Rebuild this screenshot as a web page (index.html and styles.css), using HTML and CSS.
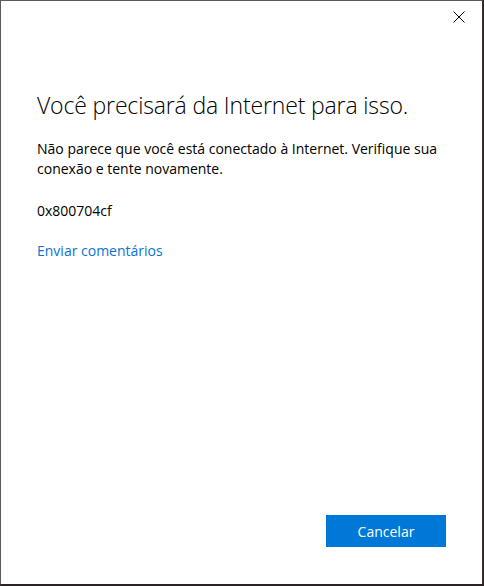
FILE: index.html
```html
<!DOCTYPE html>
<html lang="pt">
<head>
<meta charset="utf-8">
<link rel="stylesheet" href="styles.css">
</head>
<body>
<div class="window">
  <div class="titlebar">
    <button class="close" aria-label="Fechar">
      <svg width="12" height="12" viewBox="0 0 12 12"><path d="M0.5 0.5 L11.5 11.5 M11.5 0.5 L0.5 11.5" stroke="#000" stroke-width="1" fill="none"/></svg>
    </button>
  </div>
  <div class="content">
    <h1 class="title">Você precisará da Internet para isso.</h1>
    <p class="message">Não parece que você está conectado à Internet. Verifique sua conexão e tente novamente.</p>
    <p class="code">0x800704cf</p>
    <a class="link" href="#">Enviar comentários</a>
  </div>
  <div class="footer">
    <button class="primary">Cancelar</button>
  </div>
</div>
</body>
</html>
```
FILE: styles.css
```css
html, body {
  margin: 0;
  padding: 0;
  background: #2a2222;
  width: 484px;
  height: 586px;
  overflow: hidden;
}
.window {
  box-sizing: border-box;
  width: 483px;
  height: 585px;
  background: #ffffff;
  border: 1px solid #5a5a5a;
  border-right-color: #3a3030;
  border-bottom-color: #2e2424;
  display: flex;
  flex-direction: column;
  font-family: "Open Sans", "Noto Sans", sans-serif;
  color: #000;
}
.titlebar {
  height: 32px;
  display: flex;
  justify-content: flex-end;
}
.close {
  width: 46px;
  height: 32px;
  border: 0;
  background: transparent;
  padding: 0;
  display: flex;
  align-items: center;
  justify-content: center;
  margin-right: 0;
}
.content {
  flex: 1;
  padding: 0 36px;
}
.title {
  margin: 56px 0 0 0;
  font-size: 23px;
  font-weight: 300;
  line-height: 32px;
  letter-spacing: -0.15px;
}
.message {
  margin: 18px 0 0 0;
  font-size: 14px;
  line-height: 20px;
}
.code {
  margin: 22px 0 0 0;
  font-size: 14px;
  line-height: 20px;
}
.link {
  display: inline-block;
  margin-top: 20px;
  font-size: 14px;
  line-height: 20px;
  color: #0a74d0;
  text-decoration: none;
}
.footer {
  display: flex;
  justify-content: flex-end;
  padding: 0 36px 37px 0;
}
.primary {
  width: 120px;
  height: 32px;
  border: 0;
  background: #0078d7;
  color: #fff;
  font-family: "Open Sans", "Noto Sans", sans-serif;
  font-size: 14px;
  padding: 0;
}
```
